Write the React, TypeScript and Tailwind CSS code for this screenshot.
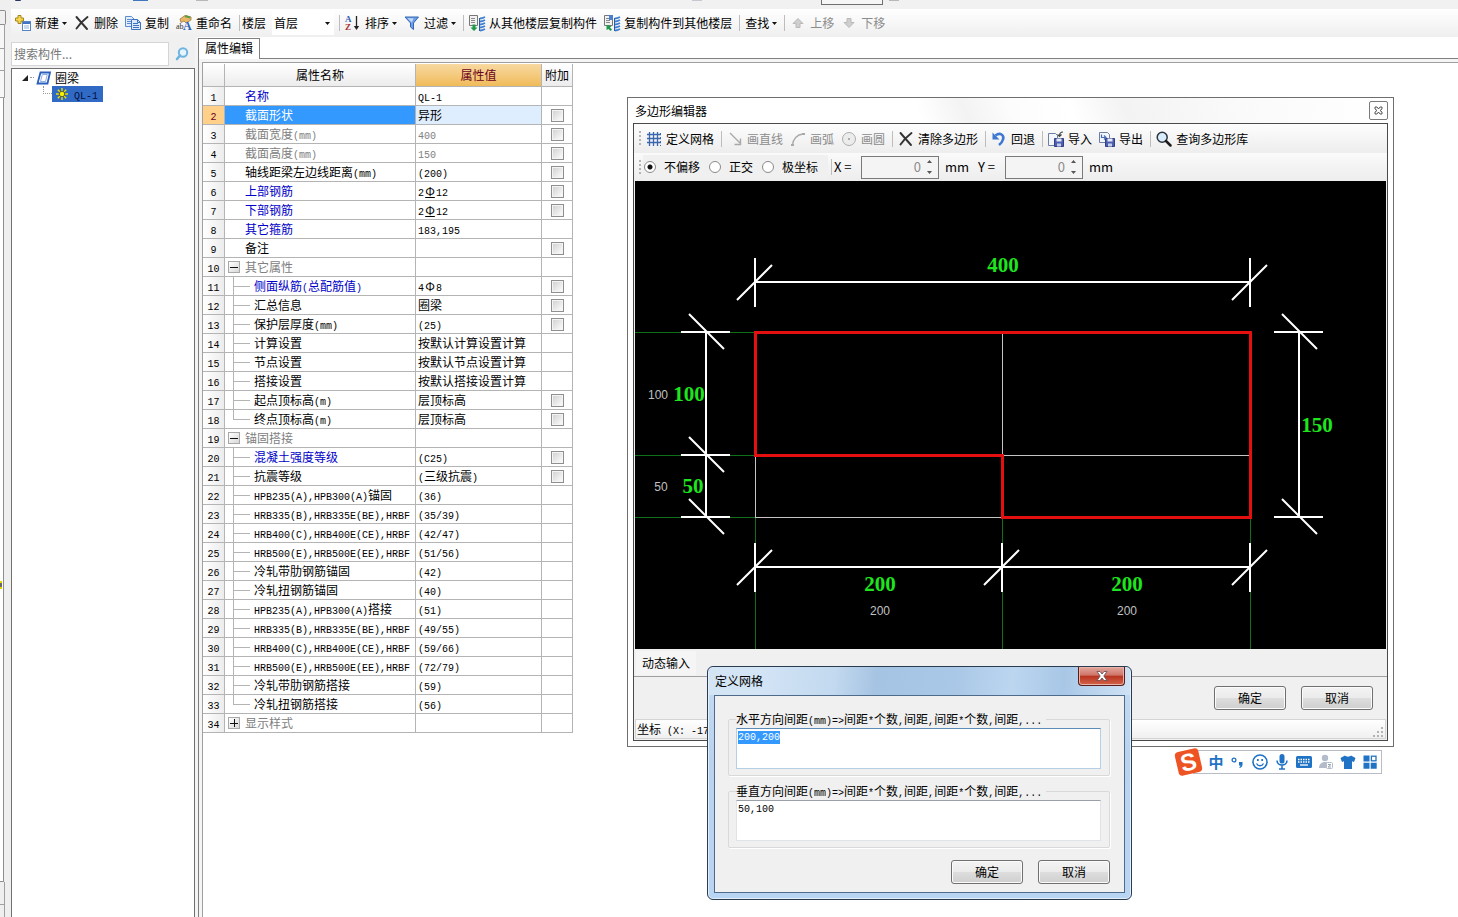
import React, { useEffect, useRef } from 'react';

type Tone = 'blue' | 'gray' | 'black';

interface Row {
  name: string;
  value?: string;
  tone?: Tone;
  check?: boolean;
  ribbed?: boolean;
  kind?: 'group' | 'child' | 'last';
  open?: boolean;
}

const ROWS: Row[] = [
  { name: '名称', value: 'QL-1', tone: 'blue' },
  { name: '截面形状', value: '异形', check: true },
  { name: '截面宽度(mm)', value: '400', tone: 'gray', check: true },
  { name: '截面高度(mm)', value: '150', tone: 'gray', check: true },
  { name: '轴线距梁左边线距离(mm)', value: '(200)', check: true },
  { name: '上部钢筋', value: '2Φ12', tone: 'blue', check: true, ribbed: true },
  { name: '下部钢筋', value: '2Φ12', tone: 'blue', check: true, ribbed: true },
  { name: '其它箍筋', value: '183,195', tone: 'blue' },
  { name: '备注', check: true },
  { name: '其它属性', tone: 'gray', kind: 'group', open: true },
  { name: '侧面纵筋(总配筋值)', value: '4Φ8', tone: 'blue', kind: 'child', check: true },
  { name: '汇总信息', value: '圈梁', kind: 'child', check: true },
  { name: '保护层厚度(mm)', value: '(25)', kind: 'child', check: true },
  { name: '计算设置', value: '按默认计算设置计算', kind: 'child' },
  { name: '节点设置', value: '按默认节点设置计算', kind: 'child' },
  { name: '搭接设置', value: '按默认搭接设置计算', kind: 'child' },
  { name: '起点顶标高(m)', value: '层顶标高', kind: 'child', check: true },
  { name: '终点顶标高(m)', value: '层顶标高', kind: 'last', check: true },
  { name: '锚固搭接', tone: 'gray', kind: 'group', open: true },
  { name: '混凝土强度等级', value: '(C25)', tone: 'blue', kind: 'child', check: true },
  { name: '抗震等级', value: '(三级抗震)', kind: 'child', check: true },
  { name: 'HPB235(A),HPB300(A)锚固', value: '(36)', kind: 'child' },
  { name: 'HRB335(B),HRB335E(BE),HRBF', value: '(35/39)', kind: 'child' },
  { name: 'HRB400(C),HRB400E(CE),HRBF', value: '(42/47)', kind: 'child' },
  { name: 'HRB500(E),HRB500E(EE),HRBF', value: '(51/56)', kind: 'child' },
  { name: '冷轧带肋钢筋锚固', value: '(42)', kind: 'child' },
  { name: '冷轧扭钢筋锚固', value: '(40)', kind: 'child' },
  { name: 'HPB235(A),HPB300(A)搭接', value: '(51)', kind: 'child' },
  { name: 'HRB335(B),HRB335E(BE),HRBF', value: '(49/55)', kind: 'child' },
  { name: 'HRB400(C),HRB400E(CE),HRBF', value: '(59/66)', kind: 'child' },
  { name: 'HRB500(E),HRB500E(EE),HRBF', value: '(72/79)', kind: 'child' },
  { name: '冷轧带肋钢筋搭接', value: '(59)', kind: 'child' },
  { name: '冷轧扭钢筋搭接', value: '(56)', kind: 'last' },
  { name: '显示样式', tone: 'gray', kind: 'group', open: false },
];

const TONES: Record<Tone, string> = {
  blue: 'text-[#0000c8]',
  gray: 'text-[#808080]',
  black: 'text-black',
};

// Latin runs are set in a fixed pitch half as wide as a Chinese character
const Mixed = ({ text, ribbed }: { text: string; ribbed?: boolean }) => (
  <>
    {text.split(/([\x20-\x7e]+|Φ)/).map((part, i) => {
      if (part === 'Φ') {
        return (
          <span key={i} className={`inline-block w-3 text-center leading-none ${ribbed ? 'underline underline-offset-1' : ''}`}>
            Φ
          </span>
        );
      }
      return i % 2 === 1 ? (
        <span key={i} className="font-['Liberation_Mono',monospace] text-[10px] leading-none whitespace-pre">
          {part}
        </span>
      ) : (
        part
      );
    })}
  </>
);

/* ---------- toolbar parts ---------- */

const Caret = () => (
  <svg width="5" height="3" viewBox="0 0 5 3" className="-ml-px shrink-0">
    <path d="M0 0h5L2.500 3z" fill="#111" />
  </svg>
);

const Sep = () => <span className="ml-[3px] mr-[2px] h-4 w-px shrink-0 bg-[#bdbdbd]" />;

const Grip = () => (
  <span className="ml-1 mr-0.5 h-[15px] w-0.5 shrink-0 bg-[repeating-linear-gradient(to_bottom,#b4b4b4_0_2px,transparent_2px_4px)]" />
);

interface ToolProps {
  icon?: React.ReactNode;
  label: string;
  caret?: boolean;
  disabled?: boolean;
}

const Tool = ({ icon, label, caret, disabled }: ToolProps) => (
  <button
    type="button"
    disabled={disabled}
    className="flex h-full shrink-0 items-center gap-1 whitespace-nowrap pl-[3px] pr-1 text-black disabled:text-[#8c8c8c]"
  >
    {icon}
    <span>{label}</span>
    {caret && <Caret />}
  </button>
);

const Icon = ({ children }: { children: React.ReactNode }) => (
  <svg width="16" height="16" viewBox="0 0 16 16" fill="none" className="shrink-0 overflow-visible">
    {children}
  </svg>
);

const NewIcon = () => (
  <Icon>
    <rect x="7.5" y="6.5" width="8" height="9" fill="#fff" stroke="#5b84c4" />
    <path d="M8 7h7v2H8z" fill="#3f74c4" />
    <path d="M9 11h5M9 13h5" stroke="#8fb0de" />
    <path d="M3 .5h3v2.500h2.500v3H6v2.500H3V6H.5V3H3z" fill="#f6d94a" stroke="#a58420" />
  </Icon>
);

const CrossIcon = () => (
  <Icon>
    <path d="M2.500 2l10.500 12M13.500 2C9 5.500 5.500 9 2.500 13.500" stroke="#333" strokeWidth="1.900" strokeLinecap="round" />
  </Icon>
);

const CopyIcon = () => (
  <Icon>
    <path d="M.5 1.500h6l3 3v7h-9z" fill="#e4eefb" stroke="#5a8cd2" />
    <path d="M2 4.500h4M2 6.500h4M2 8.500h4" stroke="#5a8cd2" />
    <path d="M6.500 4.500h6l3 3v7h-9z" fill="#dce9fa" stroke="#3d72c0" />
    <path d="M12.500 4.500v3h3M8 8.500h5M8 10.500h6M8 12.500h6" stroke="#3d72c0" />
  </Icon>
);

const RenameIcon = () => (
  <Icon>
    <path d="M4 4l5-3.500 6 1.500v3l-5 3-2-2-3 1.500z" fill="#e9b765" stroke="#9b7a3c" strokeWidth=".8" />
    <path d="M9 1l5 1.500" stroke="#5c9c48" strokeWidth="2" />
    <text x="0" y="14" fontSize="8" fontFamily="Liberation Serif, serif" fill="#333">ab</text>
    <text x="7" y="15" fontSize="12" fontWeight="bold" fontFamily="Liberation Serif, serif" fill="#2d62b8">A</text>
  </Icon>
);

const SortIcon = () => (
  <Icon>
    <text x="0" y="7" fontSize="9" fontWeight="bold" fontFamily="Liberation Serif, serif" fill="#2f5fb4">A</text>
    <text x="0" y="15" fontSize="9" fontWeight="bold" fontFamily="Liberation Serif, serif" fill="#a8322d">Z</text>
    <path d="M11.500 1v12" stroke="#222" strokeWidth="1.300" />
    <path d="M8.800 11h5.400l-2.700 4z" fill="#222" />
  </Icon>
);

const FunnelIcon = () => (
  <Icon>
    <path d="M1 2h13.500L9.500 8v6.500l-3-2.500V8z" fill="#6f9fe6" stroke="#3466b4" />
    <path d="M3.500 3.200h6L7.800 7.500z" fill="#c2d9f8" />
  </Icon>
);

const FloorIcon = ({ up }: { up?: boolean }) => (
  <Icon>
    <path d="M.5 .5h8v10h-8z" fill="#f2f2f2" stroke="#777" />
    <path d="M2 3.500h4M2 5.500h4M2 7.500h4" stroke="#888" />
    {up && <path d="M5 0h4v5H5z" fill="#4a7fd0" />}
    <path d="M10.500 3v13" stroke="#2f5b9c" />
    <path d="M11 3.500c2 0 3-.5 5-1.500M11 6.500c2 0 3-.5 5-1.500M11 9.500c2 0 3-.5 5-1.500M11 12.500c2 0 3-.5 5-1.500M11 15.500c2 0 3-.5 5-1.500" stroke="#3f7fd0" strokeWidth="1.900" />
    {up ? (
      <path d="M2.500 10l5 1-1.500 1.500 2 2-1.500 1.500-2-2-2 1z" fill="#1f9a4a" />
    ) : (
      <path d="M3.500 9.500h3v3h2L5 16l-3.500-3.500h2z" fill="#1f9a4a" />
    )}
  </Icon>
);

const MoveIcon = ({ down }: { down?: boolean }) => (
  <Icon>
    {down ? (
      <path d="M6 3.500h4v4h3L8 12.500l-5-5h3z" fill="#cfcfcf" stroke="#b9b9b9" />
    ) : (
      <path d="M8 3.500l5 5h-3v4H6v-4H3z" fill="#cfcfcf" stroke="#b9b9b9" />
    )}
  </Icon>
);

const GridIcon = () => (
  <Icon>
    <path d="M3.500 1v14M7.500 1v14M11.500 1v14M1 3.500h14M1 7.500h14M1 11.500h14" stroke="#3a66ad" strokeWidth="1.300" />
    <path d="M14.500 2v13" stroke="#3a66ad" strokeDasharray="2 2" />
  </Icon>
);

const LineIcon = () => (
  <Icon>
    <path d="M3 2l10 10M13.500 7.500v6h-6" stroke="#a9a9a9" strokeWidth="1.400" />
  </Icon>
);

const ArcIcon = () => (
  <Icon>
    <path d="M2.500 14C3 8 7 3.500 13 3" stroke="#a9a9a9" strokeWidth="1.300" />
    <path d="M1 13h3v2H1zM12 2h3v2h-3z" fill="#a9a9a9" />
  </Icon>
);

const CircleIcon = () => (
  <Icon>
    <circle cx="8" cy="8" r="6.500" fill="#ececec" stroke="#adadad" />
    <path d="M7 8h2" stroke="#999" strokeWidth="1.500" />
  </Icon>
);

const UndoIcon = () => (
  <Icon>
    <path d="M4.500 4.500C9 1 13.500 4 12 8.500c-.6 2.200-2 4-4 5.500" stroke="#3f78d0" strokeWidth="2.600" />
    <path d="M1.500 1.500v7h7z" fill="#3f78d0" />
  </Icon>
);

const DiskIcon = ({ out }: { out?: boolean }) => (
  <Icon>
    <path d={out ? 'M.5 1.500h8l2 2v8h-10z' : 'M.5 2.500h7l2 2v10h-9z'} fill="#f3f6fb" stroke="#6d7fa5" />
    <path d="M6.500 7.500h9v8h-9z" fill="#4d5fb0" stroke="#323f86" />
    <path d="M8.500 7.500h5v3h-5z" fill="#e6eaf6" />
    <path d="M9 12.500h4v3H9z" fill="#c6cde8" />
    {out ? (
      <path d="M2.500 3.500v3h4M5 4.500l2 2-2 2" stroke="#4a6cb8" strokeWidth="1.200" />
    ) : (
      <path d="M15 1c-2.500 0-3.500 1-3.500 4M9.500 3.500l2 2 2-2" stroke="#444" strokeWidth="1.200" />
    )}
  </Icon>
);

const LensIcon = () => (
  <Icon>
    <circle cx="6.200" cy="6.200" r="5" fill="#d8ecfb" stroke="#2c3440" strokeWidth="1.500" />
    <path d="M10 10l4.500 4.500" stroke="#1d1d1d" strokeWidth="2.500" strokeLinecap="round" />
  </Icon>
);

const PushButton = ({ children }: { children: React.ReactNode }) => (
  <button
    type="button"
    className="h-6 w-[72px] rounded-[3px] border border-[#707070] bg-[linear-gradient(#f3f3f3,#ebebeb_48%,#dddddd_52%,#cfcfcf)] text-black shadow-[inset_0_0_0_1px_#fbfbfb]"
  >
    {children}
  </button>
);

/* ---------- main window ---------- */

const MainToolbar = () => (
  <div className="flex h-7 items-center overflow-hidden bg-linear-to-b from-white to-[#efefef] pl-px">
    <Tool icon={<NewIcon />} label="新建" caret />
    <Tool icon={<CrossIcon />} label="删除" />
    <Tool icon={<CopyIcon />} label="复制" />
    <Tool icon={<RenameIcon />} label="重命名" />
    <Sep />
    <label htmlFor="floor" className="shrink-0">楼层</label>
    <div className="relative ml-1.5 mr-0.5 flex h-6 w-[62px] shrink-0 items-center bg-white">
      <select id="floor" className="h-full w-full appearance-none bg-transparent pl-0.5 outline-none">
        <option>首层</option>
      </select>
      <span className="pointer-events-none absolute right-1 flex"><Caret /></span>
    </div>
    <Sep />
    <Tool icon={<SortIcon />} label="排序" caret />
    <Tool icon={<FunnelIcon />} label="过滤" caret />
    <Sep />
    <Tool icon={<FloorIcon />} label="从其他楼层复制构件" />
    <Tool icon={<FloorIcon up />} label="复制构件到其他楼层" />
    <Sep />
    <Tool label="查找" caret />
    <Sep />
    <Tool icon={<MoveIcon />} label="上移" disabled />
    <Tool icon={<MoveIcon down />} label="下移" disabled />
  </div>
);

const DockStrip = () => (
  <aside className="flex w-[11px] shrink-0 flex-col bg-[#efefef]">
    <div className="h-2.5" />
    <div className="h-[15px] w-1.5 rounded-r-xs border border-l-0 border-[#8e8e8e]" />
    <div className="h-6 w-[5px] border-b border-r border-[#a0a0a0] bg-[#f7f7f7]" />
    <div className="h-[22px] w-[5px] border-b border-r border-[#a0a0a0] bg-[#f7f7f7]" />
    <div className="h-[27px] w-[5px] border-b border-r border-[#a0a0a0] bg-[#f7f7f7]" />
    <div className="flex w-1 grow items-center border-b border-r border-[#8e8e8e] bg-white">
      <span className="mt-[190px] h-2 w-0.5 border-y-2 border-[#e8d800] bg-[#666]" />
    </div>
    <div className="h-[23px] w-[5px] border-b border-r border-[#a0a0a0]" />
    <div className="h-3 w-[5px] border-r border-[#a0a0a0]" />
  </aside>
);

const ComponentTree = () => (
  <section className="flex w-[184px] shrink-0 flex-col bg-[#f0f0f0]">
    <div className="flex h-[31px] items-center pt-0.5">
      <input
        type="text"
        aria-label="搜索构件"
        placeholder="搜索构件..."
        className="h-6 w-[158px] border border-[#d5d5d5] bg-white pl-0.5 outline-none placeholder:text-[#777]"
      />
      <button type="button" aria-label="搜索" className="ml-1.5">
        <svg width="14" height="14" viewBox="0 0 14 14" fill="none">
          <circle cx="8" cy="5.500" r="4.200" fill="#e6f4fd" stroke="#6db4e2" strokeWidth="2" />
          <path d="M5 8.500L2 12" stroke="#6db4e2" strokeWidth="2.600" strokeLinecap="round" />
        </svg>
      </button>
    </div>
    <ul className="grow border-x border-t border-[#707070] bg-white">
      <li className="flex h-[17px] items-center pl-2.5">
        <svg width="6" height="6" viewBox="0 0 6 6"><path d="M6 0v6H0z" fill="#222" /></svg>
        <span className="ml-0.5 w-1 border-t border-dotted border-[#999]" />
        <svg width="16" height="14" viewBox="0 0 16 14" fill="none" className="ml-0.5">
          <path d="M4.500 1.500h9.500L11.500 12.500H1.500z" fill="#fff" stroke="#2b5fbd" strokeWidth="1.800" />
          <path d="M6.300 3.500h5L9.500 10.500h-5z" fill="#fff" stroke="#6f9be0" strokeWidth=".8" />
        </svg>
        <span className="ml-[3px]">圈梁</span>
      </li>
      <li className="flex h-4 items-start pl-[31px]">
        <span className="h-2 w-[9px] border-b border-l border-dotted border-[#999]" />
        <span className="flex h-4 w-[51px] items-center bg-[#316ac5] pl-1">
          <svg width="12" height="12" viewBox="0 0 12 12" fill="none">
            <path d="M6 0v12M0 6h12M1.800 1.800l8.400 8.400M10.200 1.800l-8.400 8.400" stroke="#e8e000" strokeWidth="1.400" />
            <circle cx="6" cy="6" r="2.800" fill="#f7ef00" stroke="#333" strokeWidth=".8" />
          </svg>
          <span className="ml-1.5 text-[#001040]"><Mixed text="QL-1" /></span>
        </span>
      </li>
    </ul>
  </section>
);

const NameCell = ({ row, selected }: { row: Row; selected: boolean }) => {
  const color = selected ? 'text-white' : TONES[row.tone ?? 'black'];
  return (
    <div className={`flex h-[18px] items-center overflow-hidden whitespace-nowrap ${color}`}>
      {row.kind === 'group' && (
        <button
          type="button"
          aria-label={row.open ? '折叠' : '展开'}
          className="ml-[3px] mr-[5px] h-3 w-3 shrink-0 border border-[#a8a8a8] bg-linear-to-br from-white to-[#d8d8d8]"
        >
          <svg width="10" height="10" viewBox="0 0 10 10">
            <path d={row.open ? 'M1 5h8' : 'M1 5h8M5 1v8'} stroke="#111" strokeWidth="1" shapeRendering="crispEdges" />
          </svg>
        </button>
      )}
      {(row.kind === 'child' || row.kind === 'last') && (
        <span className="ml-2 mr-1 flex h-full w-[17px] shrink-0 flex-col">
          <span className="h-2.5 border-b border-l border-[#b4b4b4]" />
          {row.kind === 'child' && <span className="grow border-l border-[#b4b4b4]" />}
        </span>
      )}
      {!row.kind && <span className="w-5 shrink-0" />}
      <span><Mixed text={row.name} /></span>
    </div>
  );
};

const HEAD = 'h-[23px] border-b border-r border-[#b4b4b4] font-normal';
const CELL = 'h-[19px] border-b border-r border-[#b4b4b4] p-0';

const PropertyTable = () => (
  <table className="w-[370px] table-fixed border-separate border-spacing-0 leading-[18px]">
    <colgroup>
      <col className="w-[22px]" />
      <col className="w-[191px]" />
      <col className="w-[126px]" />
      <col className="w-[31px]" />
    </colgroup>
    <thead>
      <tr>
        <th className={`${HEAD} bg-linear-to-b from-white to-[#ececec]`} />
        <th className={`${HEAD} bg-linear-to-b from-white to-[#ececec]`}>属性名称</th>
        <th className={`${HEAD} bg-linear-to-b from-[#f8d9a0] to-[#f0bb58] text-[#6b0020]`}>属性值</th>
        <th className={`${HEAD} bg-linear-to-b from-white to-[#ececec]`}>附加</th>
      </tr>
    </thead>
    <tbody>
      {ROWS.map((row, i) => {
        const selected = i === 1;
        return (
          <tr key={i}>
            <td className={`${CELL} text-center ${selected ? 'bg-[#ffd08a] text-[#6b0020]' : 'bg-linear-to-r from-white to-[#ececec]'}`}>
              <div className="h-[18px]"><Mixed text={String(i + 1)} /></div>
            </td>
            <td className={`${CELL} ${selected ? 'bg-[#3399ff]' : ''}`}>
              <NameCell row={row} selected={selected} />
            </td>
            <td className={`${CELL} ${selected ? 'bg-[#dfeefe]' : ''} ${row.tone === 'gray' ? 'text-[#808080]' : ''}`}>
              <div className="h-[18px] whitespace-nowrap pl-0.5">
                <Mixed text={row.value ?? ''} ribbed={row.ribbed} />
              </div>
            </td>
            <td className={CELL}>
              {row.check && (
                <input
                  type="checkbox"
                  aria-label={`${row.name} 附加`}
                  className="mx-auto block h-[13px] w-[13px] appearance-none border border-[#8e8f8f] bg-linear-to-br from-[#cfcfcf] to-white shadow-[inset_0_0_0_1px_#f4f4f4]"
                />
              )}
            </td>
          </tr>
        );
      })}
    </tbody>
  </table>
);

/* ---------- polygon editor ---------- */

// oblique tick across a horizontal dimension line
const TickH = ({ x, y }: { x: number; y: number }) => (
  <path d={`M${x} ${y - 24}v49M${x - 18} ${y + 18}l35 -35`} />
);

// and across a vertical one
const TickV = ({ x, y }: { x: number; y: number }) => (
  <path d={`M${x - 25} ${y}h49M${x - 17} ${y - 18}l35 35`} />
);

const SectionCanvas = () => (
  <svg width="751" height="468" viewBox="0 0 751 468" fill="none" className="mx-px block bg-black">
    <path d="M0 151.500h120M0 274.500h120M0 336.500h120M120.500 336v132M367.500 336v132M615.500 336v132" stroke="#0f701a" />
    <path d="M367.500 151v123M367 274.500h248M120.500 274v62M120 336.500h247" stroke="#c4c4c4" />
    <path d="M120.500 151.500h495v185h-248v-62h-247z" stroke="#e60f0f" strokeWidth="3" />
    <g stroke="#fff" strokeWidth="2">
      <path d="M120 101h495M120 386h495M71 151v185M664 151v185" />
      <TickH x={120} y={101} />
      <TickH x={615} y={101} />
      <TickH x={120} y={386} />
      <TickH x={367} y={386} />
      <TickH x={615} y={386} />
      <TickV x={71} y={151} />
      <TickV x={71} y={274} />
      <TickV x={71} y={336} />
      <TickV x={664} y={151} />
      <TickV x={664} y={336} />
    </g>
    <g fill="#1ee61e" textAnchor="middle" className="font-['Liberation_Serif',serif] text-[21px] font-bold">
      <text x="368" y="91">400</text>
      <text x="54" y="220">100</text>
      <text x="58" y="312">50</text>
      <text x="682" y="251">150</text>
      <text x="245" y="410">200</text>
      <text x="492" y="410">200</text>
    </g>
    <g fill="#c0c0c0" textAnchor="middle" className="font-['Liberation_Sans',sans-serif] text-[12px]">
      <text x="23" y="218">100</text>
      <text x="26" y="310">50</text>
      <text x="245" y="434">200</text>
      <text x="492" y="434">200</text>
    </g>
  </svg>
);

const OffsetOption = ({ label, checked }: { label: string; checked?: boolean }) => (
  <label className="flex shrink-0 items-center gap-2 whitespace-nowrap">
    <input
      type="radio"
      name="offset"
      defaultChecked={checked}
      className="h-3 w-3 appearance-none rounded-full border border-[#8a8a8a] bg-white checked:bg-[radial-gradient(circle,#111_0_2px,#fff_3px)]"
    />
    {label}
  </label>
);

const Coordinate = ({ axis }: { axis: string }) => (
  <div className="flex shrink-0 items-center text-[13px]">
    <label htmlFor={`axis-${axis}`} className="w-[27px] whitespace-nowrap">{axis} =</label>
    <div className="flex h-[23px] w-[78px] items-center border border-[#7a7a7a] bg-[#f4f4f4]">
      <input
        id={`axis-${axis}`}
        type="text"
        defaultValue="0"
        disabled
        className="w-full min-w-0 bg-transparent pr-[3px] text-right text-[#8c8c8c]"
      />
      <div className="flex h-full w-3.5 shrink-0 flex-col justify-around pr-1">
        <button type="button" aria-label={`${axis} 增加`} disabled className="flex justify-center">
          <svg width="5" height="3" viewBox="0 0 5 3"><path d="M0 3h5L2.500 0z" fill="#555" /></svg>
        </button>
        <button type="button" aria-label={`${axis} 减少`} disabled className="flex justify-center">
          <svg width="5" height="3" viewBox="0 0 5 3"><path d="M0 0h5L2.500 3z" fill="#555" /></svg>
        </button>
      </div>
    </div>
    <span className="ml-1.5 w-[33px]">mm</span>
  </div>
);

const PolygonEditor = () => (
  <section className="absolute left-[627px] top-[97px] w-[767px] border border-[#6e6e6e] bg-white px-[5px] pb-[5px]">
    <header className="flex h-[25px] items-center justify-between bg-[linear-gradient(70deg,#fff_38%,#f3f3f3_44%,#fcfcfc_50%,#fff_58%,#f3f3f3_65%,#fafafa_80%,#fff)] pl-0.5">
      <h2>多边形编辑器</h2>
      <button type="button" aria-label="关闭" className="flex h-[19px] w-[19px] items-center justify-center rounded-xs border border-[#7a7a7a] bg-white">
        <svg width="9" height="9" viewBox="0 0 9 9" fill="none">
          <path d="M1 1h2l1.500 2L6 1h2v2L6 4.500 8 6v2H6L4.500 6 3 8H1V6l2-1.500L1 3z" stroke="#444" strokeWidth=".9" />
        </svg>
      </button>
    </header>
    <div className="border border-[#4a4a4a] bg-[#f0f0f0]">
      <div className="flex h-[29px] items-center bg-linear-to-b from-[#fdfdfd] to-[#ededed] pl-px">
        <Grip />
        <Tool icon={<GridIcon />} label="定义网格" />
        <Sep />
        <Tool icon={<LineIcon />} label="画直线" disabled />
        <Tool icon={<ArcIcon />} label="画弧" disabled />
        <Tool icon={<CircleIcon />} label="画圆" disabled />
        <Sep />
        <Tool icon={<CrossIcon />} label="清除多边形" />
        <Sep />
        <Tool icon={<UndoIcon />} label="回退" />
        <Sep />
        <Tool icon={<DiskIcon />} label="导入" />
        <Tool icon={<DiskIcon out />} label="导出" />
        <Sep />
        <Tool icon={<LensIcon />} label="查询多边形库" />
      </div>
      <div className="flex h-7 items-center bg-linear-to-b from-[#fafafa] to-[#ededed] pl-px">
        <Grip />
        <div className="flex h-6 w-[185px] shrink-0 items-center gap-[9px] bg-[#f0f0f0] pl-px">
          <OffsetOption label="不偏移" checked />
          <OffsetOption label="正交" />
          <OffsetOption label="极坐标" />
        </div>
        <Sep />
        <Coordinate axis="X" />
        <Coordinate axis="Y" />
      </div>
      <SectionCanvas />
      <div className="flex h-7 items-center border-b border-[#a0a0a0] pl-0.5">
        <button type="button" className="h-6 bg-[#f5f5f5] px-1.5">动态输入</button>
      </div>
      <div className="flex h-[42px] items-center justify-end gap-[15px] pr-3.5">
        <PushButton>确定</PushButton>
        <PushButton>取消</PushButton>
      </div>
      <footer className="mx-px mb-px flex h-5 items-center justify-between border border-[#d4d4d4] bg-linear-to-b from-white to-[#f0f0f0] pl-px">
        <span><Mixed text="坐标 (X: -17" /></span>
        <svg width="12" height="12" viewBox="0 0 12 12" className="self-end" fill="#b4b4b4">
          <path d="M8 1h2v2H8zM8 5h2v2H8zM8 9h2v2H8zM4 5h2v2H4zM4 9h2v2H4zM0 9h2v2H0z" />
        </svg>
      </footer>
    </div>
  </section>
);

/* ---------- grid dialog ---------- */

const SpacingField = ({ id, label, value, active }: { id: string; label: string; value: string; active?: boolean }) => {
  const ref = useRef<HTMLTextAreaElement>(null);

  useEffect(() => {
    if (active) {
      ref.current?.focus();
      ref.current?.select();
    }
  }, [active]);

  return (
    <fieldset className="min-w-0 rounded-xs border border-[#d9d9d9] pb-1.5 pl-[7px] pr-2 pt-0.5 shadow-[1px_1px_0_#fff]">
      <legend className="h-3.5 pr-1 leading-[14px]">
        <label htmlFor={id}><Mixed text={label} /></label>
      </legend>
      <textarea
        id={id}
        ref={ref}
        defaultValue={value}
        className="block h-[41px] w-full resize-none border border-[#e0e3e8] border-t-[#9aa0a8] bg-white px-px py-0.5 font-['Liberation_Mono',monospace] text-[10px] leading-[13px] outline-none selection:bg-[#3399ff] selection:text-white focus:border-[#b5cfe7] focus:border-t-[#5c8db8]"
      />
    </fieldset>
  );
};

const GridDialog = () => (
  <section className="absolute left-[707px] top-[666px] w-[425px] rounded-md border border-[#2a3c50] bg-[linear-gradient(#c4dbf2,#b9d3ef_40%,#b9d5f4)] px-1.5 pb-1.5 shadow-[inset_0_0_0_1px_#e3f0fc]">
    <header className="relative -mx-[5px] flex h-7 items-center rounded-t-md bg-[linear-gradient(95deg,#d3e4f5_12%,#c2d9ef_30%,#a5c3e2_40%,#a9c7e6_58%,#bcd6f0_72%,#a8c7e6_84%,#cfe2f5)] pl-1.5">
      <h2>定义网格</h2>
      <button
        type="button"
        aria-label="关闭"
        className="absolute right-[5px] top-0 flex h-[19px] w-[47px] items-center justify-center rounded-b-[4px] border border-t-0 border-[#5a1c1a] bg-[linear-gradient(#e2a79c,#cf7468_46%,#b8331f_50%,#d2644a)] shadow-[inset_0_0_0_1px_#e9b3a8]"
      >
        <svg width="12" height="10" viewBox="0 0 12 10">
          <path d="M1 .5h3l2 2.500 2-2.500h3L7.800 5 11 9.500H8L6 7 4 9.500H1L4.200 5z" fill="#fff" stroke="#5b4a55" strokeWidth=".8" />
        </svg>
      </button>
    </header>
    <div className="flex flex-col border border-[#4f6b8c] bg-[#f0f0f0] pb-2 pl-[13px] pr-3.5 pt-4">
      <SpacingField id="spacing-h" label="水平方向间距(mm)=>间距*个数,间距,间距*个数,间距,..." value="200,200" active />
      <div className="mt-2 flex flex-col">
        <SpacingField id="spacing-v" label="垂直方向间距(mm)=>间距*个数,间距,间距*个数,间距,..." value="50,100" />
      </div>
      <div className="mt-3 flex justify-end gap-[15px]">
        <PushButton>确定</PushButton>
        <PushButton>取消</PushButton>
      </div>
    </div>
  </section>
);

/* ---------- input method bar ---------- */

const ImeBar = () => (
  <div className="absolute left-[1174px] top-[747px] flex items-center">
    <svg width="29" height="30" viewBox="0 0 29 30" className="relative z-10 -mr-2.5">
      <g transform="rotate(-13 14.500 15)">
        <rect x="2.500" y="3" width="24" height="24" rx="4" fill="#ee5423" />
        <text x="14.500" y="23.500" textAnchor="middle" fontSize="24" fontWeight="bold" fontFamily="Liberation Sans, sans-serif" fill="#fff">S</text>
      </g>
    </svg>
    <div className="flex h-6 w-[189px] items-center gap-1.5 border border-[#b9bcc4] bg-white pl-3.5 text-[#1f72c4]">
      <span className="w-4 text-center text-[15px] leading-5 font-bold">中</span>
      <Icon>
        <circle cx="4" cy="6" r="1.900" stroke="currentColor" strokeWidth="1.300" />
        <path d="M9 8h3.500v2.500c0 1.800-1 3-2.800 3.500l-.4-.9c.8-.4 1.200-.9 1.200-1.600H9z" fill="currentColor" />
      </Icon>
      <Icon>
        <circle cx="8" cy="8" r="7" stroke="currentColor" strokeWidth="1.600" />
        <path d="M4.500 9.500c1.500 3 5.500 3 7 0" stroke="currentColor" strokeWidth="1.300" />
        <path d="M5 5h1.700v2H5zM9.300 5H11v2H9.300z" fill="currentColor" />
      </Icon>
      <Icon>
        <rect x="5.500" y="0" width="5" height="9.500" rx="2.500" fill="currentColor" />
        <path d="M3 6.500c0 6 10 6 10 0M8 11v4M5 15h6" stroke="currentColor" strokeWidth="1.500" />
      </Icon>
      <Icon>
        <rect x="0" y="2" width="16" height="12" rx="1.500" fill="currentColor" />
        <path d="M2 5.500h12M2 8h12" stroke="#fff" strokeWidth="1.400" strokeDasharray="1.500 1" />
        <path d="M4 11h8" stroke="#fff" strokeWidth="1.300" />
      </Icon>
      <Icon>
        <circle cx="7" cy="4" r="3.200" fill="#b4bccb" />
        <path d="M1 14c0-8 12-8 12 0z" fill="#b4bccb" />
        <rect x="8.500" y="8.500" width="6" height="6" rx="1" fill="#fff" stroke="#b4bccb" />
        <path d="M10 10.500h3l-3 2.500h3" stroke="#9aa5b8" />
      </Icon>
      <Icon>
        <path d="M5 1.500c1 1.500 5 1.500 6 0l4.500 2.500-1.500 4-2-.8V15H4V7.200L2 8 .5 4z" fill="currentColor" />
      </Icon>
      <Icon>
        <path d="M1.500 1.500h6v6h-6zM1.500 8.700h6v6h-6zM8.700 8.700h6v6h-6z" fill="currentColor" />
        <rect x="9.400" y="2.200" width="4.600" height="4.600" stroke="currentColor" strokeWidth="1.300" />
      </Icon>
    </div>
  </div>
);

const App: React.FC = () => (
  <div className="relative flex min-h-screen overflow-hidden bg-white font-['Noto_Sans_CJK_SC',sans-serif] text-[12px] leading-4 text-black">
    <DockStrip />
    <main className="flex min-w-0 grow flex-col">
      {/* lower edge of the toolbar above */}
      <div className="flex h-[9px] items-start bg-[#f1f1f1] pl-1">
        <span className="h-px w-1.5 rounded-b-full bg-[#2a3566]" />
        <span className="ml-28 h-px w-[15px] bg-[#3f78bd]" />
        <span className="ml-12 h-px w-3 bg-[#b8b8b8]" />
        <span className="ml-[484px] h-px w-2.5 bg-[#c8c8d2]" />
        <span className="ml-[119px] h-[5px] w-[62px] border border-t-0 border-[#707070] bg-[#f6f6f6]" />
        <span className="ml-1.5 h-px w-2.5 bg-[#b8b8b8]" />
      </div>
      <MainToolbar />
      <div className="flex grow">
        <ComponentTree />
        <div className="flex min-w-0 grow flex-col bg-[#f4f4f4] pl-[3px]">
          <div className="flex h-[22px] items-stretch bg-white">
            <div className="mt-px border-l border-r border-t border-[#808080] px-1.5 leading-[18px]">属性编辑</div>
            <div className="grow border-b border-[#808080]" />
          </div>
          <div className="flex grow flex-col border-l border-[#808080] pl-[3px] pt-[3px]">
            <div className="grow border-l border-t border-[#a0a0a0] bg-white pt-px">
              <PropertyTable />
            </div>
          </div>
        </div>
      </div>
    </main>
    <PolygonEditor />
    <GridDialog />
    <ImeBar />
  </div>
);

export default App;
